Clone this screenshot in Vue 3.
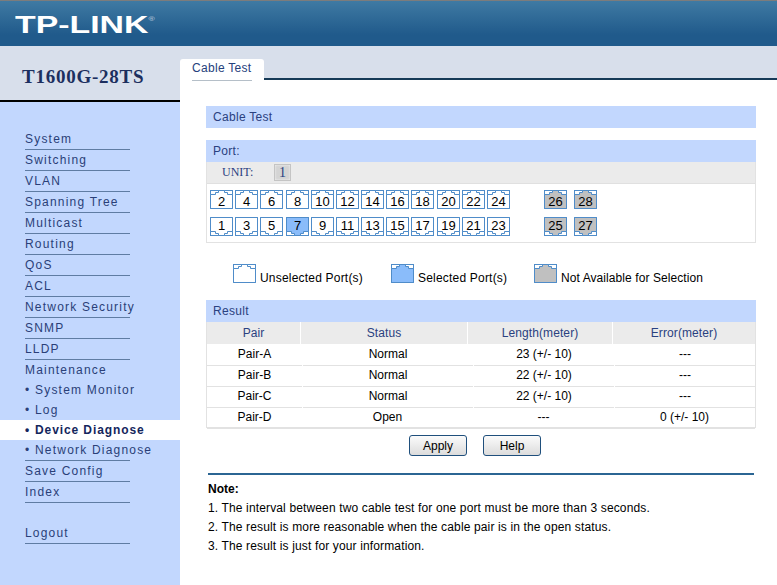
<template>
  <div class="page">
    <header class="top-bar">
      <span class="logo">TP-LINK<sup class="reg">®</sup></span>
    </header>

    <div class="body-row">
      <aside class="sidebar">
        <div class="model">T1600G-28TS</div>
        <nav class="menu">
          <a
            v-for="item in menuItems"
            :key="item.label"
            class="menu-item"
            :class="{ sub: item.sub, active: item.active, plain: item.plain, gap: item.gap, 'last-sub': item.last }"
          >
            <span v-if="item.sub" class="dot">•</span>{{ item.label }}
          </a>
        </nav>
      </aside>

      <main class="content">
        <div class="tabs">
          <div class="tab"><span>Cable Test</span></div>
        </div>

        <div class="panel">
          <div class="title-bar title-main">Cable Test</div>

          <section class="port-box">
            <div class="title-bar">Port:</div>
            <div class="unit-row">
              <span class="unit-label">UNIT:</span>
              <span class="unit-btn">1</span>
            </div>
            <div class="port-grid">
              <div class="port-row" v-for="(row, r) in portRows" :key="r">
                <div class="port-group main-ports">
                  <div
                    v-for="n in row.main"
                    :key="n"
                    class="port"
                    :class="{ flip: r === 1, selected: n === 7 }"
                  >
                    <svg class="port-svg" width="23" height="19" viewBox="0 0 23 19">
                      <rect class="port-frame" x="0.5" y="0.5" width="22" height="18" />
                      <path class="port-shape" :d="portPath" />
                    </svg>
                    <span class="port-num">{{ n }}</span>
                  </div>
                </div>
                <div class="port-group sfp">
                  <div v-for="n in row.sfp" :key="n" class="port na" :class="{ flip: r === 1 }">
                    <svg class="port-svg" width="23" height="19" viewBox="0 0 23 19">
                      <rect class="port-frame" x="0.5" y="0.5" width="22" height="18" />
                      <path class="port-shape" :d="portPath" />
                    </svg>
                    <span class="port-num">{{ n }}</span>
                  </div>
                </div>
              </div>
            </div>
          </section>

          <div class="legend">
            <div class="legend-item" v-for="l in legend" :key="l.text">
              <div class="port" :class="l.cls">
                <svg class="port-svg" width="23" height="19" viewBox="0 0 23 19">
                  <rect class="port-frame" x="0.5" y="0.5" width="22" height="18" />
                  <path class="port-shape" :d="portPath" />
                </svg>
              </div>
              <span class="legend-text">{{ l.text }}</span>
            </div>
          </div>

          <section class="result-box">
            <div class="title-bar">Result</div>
            <div class="result-head">
              <div>Pair</div>
              <div>Status</div>
              <div>Length(meter)</div>
              <div>Error(meter)</div>
            </div>
            <div class="result-row" v-for="row in results" :key="row.pair">
              <div>{{ row.pair }}</div>
              <div>{{ row.status }}</div>
              <div>{{ row.length }}</div>
              <div>{{ row.error }}</div>
            </div>
          </section>

          <div class="actions">
            <button type="button" class="btn">Apply</button>
            <button type="button" class="btn">Help</button>
          </div>

          <div class="notes">
            <div class="note-title">Note:</div>
            <div class="note-line" v-for="n in notes" :key="n">{{ n }}</div>
          </div>
        </div>
      </main>
    </div>
  </div>
</template>

<script setup>
// Sidebar entries
const menuItems = [
  { label: 'System' },
  { label: 'Switching' },
  { label: 'VLAN' },
  { label: 'Spanning Tree' },
  { label: 'Multicast' },
  { label: 'Routing' },
  { label: 'QoS' },
  { label: 'ACL' },
  { label: 'Network Security' },
  { label: 'SNMP' },
  { label: 'LLDP' },
  { label: 'Maintenance', plain: true },
  { label: 'System Monitor', sub: true },
  { label: 'Log', sub: true },
  { label: 'Device Diagnose', sub: true, active: true },
  { label: 'Network Diagnose', sub: true, last: true },
  { label: 'Save Config' },
  { label: 'Index' },
  { label: 'Logout', gap: true },
]

// Port panel, top row is even, bottom row is odd
const portRows = [
  { main: [2, 4, 6, 8, 10, 12, 14, 16, 18, 20, 22, 24], sfp: [26, 28] },
  { main: [1, 3, 5, 7, 9, 11, 13, 15, 17, 19, 21, 23], sfp: [25, 27] },
]

// RJ45 jack body with the notch at the top, the frame is drawn separately
const portPath = 'M0.5 18.5V4.5H5.5V2.5H8.5V0.5H14.5V2.5H17.5V4.5H22.5V18.5Z'

const legend = [
  { cls: '', text: 'Unselected Port(s)' },
  { cls: 'selected', text: 'Selected Port(s)' },
  { cls: 'na', text: 'Not Available for Selection' },
]

const results = [
  { pair: 'Pair-A', status: 'Normal', length: '23 (+/- 10)', error: '---' },
  { pair: 'Pair-B', status: 'Normal', length: '22 (+/- 10)', error: '---' },
  { pair: 'Pair-C', status: 'Normal', length: '22 (+/- 10)', error: '---' },
  { pair: 'Pair-D', status: 'Open', length: '---', error: '0 (+/- 10)' },
]

const notes = [
  '1. The interval between two cable test for one port must be more than 3 seconds.',
  '2. The result is more reasonable when the cable pair is in the open status.',
  '3. The result is just for your information.',
]
</script>

<style>
html,
body {
  margin: 0;
  background: #fff;
}
</style>

<style scoped>
.page {
  width: 777px;
  height: 585px;
  overflow: hidden;
  display: flex;
  flex-direction: column;
  font-family: 'Liberation Sans', Arial, sans-serif;
  font-size: 12px;
  color: #000;
}

.top-bar {
  height: 46px;
  flex: none;
  box-sizing: border-box;
  border-top: 1px solid #7c7c7c;
  background: linear-gradient(#3f7aa3, #205a8b 75%);
  padding: 10px 0 0 15px;
}

.logo {
  font-size: 24px;
  line-height: 27px;
  font-weight: 700;
  color: #fff;
  display: inline-block;
  transform: scaleX(1.41);
  transform-origin: left center;
  white-space: nowrap;
}

.reg {
  font-size: 6px;
  font-weight: 400;
  vertical-align: 12px;
  line-height: 0;
  color: #c9d6e0;
}

.body-row {
  flex: 1;
  display: flex;
  min-height: 0;
}

.sidebar {
  width: 180px;
  flex: none;
  background: #c2d7fe;
}

.model {
  height: 56px;
  box-sizing: border-box;
  background: #d8dfeb;
  border-bottom: 2px solid #000;
  padding-top: 20px;
  padding-left: 22px;
  font-family: 'Liberation Serif', 'Times New Roman', serif;
  font-size: 19px;
  line-height: 22px;
  font-weight: 700;
  color: #1c2f5f;
  letter-spacing: 0.75px;
  white-space: nowrap;
}

.menu {
  display: flex;
  flex-direction: column;
  padding-top: 27px;
}

.menu-item {
  display: block;
  margin-left: 25px;
  width: 105px;
  height: 21px;
  box-sizing: border-box;
  border-bottom: 1px solid #5f7ca3;
  font-size: 12px;
  line-height: 21px;
  letter-spacing: 1.2px;
  color: #2a3f78;
  white-space: nowrap;
}

.menu-item.plain {
  height: 20px;
  line-height: 20px;
  border-bottom: none;
}

.menu-item.sub {
  margin-left: 0;
  width: auto;
  height: 20px;
  padding-left: 25px;
  line-height: 20px;
  border-bottom: none;
}

.menu-item.last-sub {
  height: 21px;
  position: relative;
}

.menu-item.last-sub::after {
  content: '';
  position: absolute;
  left: 25px;
  width: 105px;
  bottom: 0;
  border-bottom: 1px solid #5f7ca3;
}

.dot {
  display: inline-block;
  width: 10px;
  letter-spacing: 0;
}

.menu-item.active {
  background: #fff;
  font-weight: 700;
  color: #14265c;
  letter-spacing: 0.9px;
}

.menu-item.gap {
  margin-top: 20px;
}

.content {
  flex: 1;
  min-width: 0;
  display: flex;
  flex-direction: column;
}

.tabs {
  height: 34px;
  flex: none;
  box-sizing: border-box;
  background: #d8dfeb;
  border-bottom: 2px solid #163a57;
  padding-top: 13px;
}

.tab {
  width: 84px;
  height: 21px;
  box-sizing: border-box;
  background: #fff;
  border-radius: 3px 3px 0 0;
  padding-left: 12px;
  position: relative;
}

.tab span {
  display: block;
  width: 60px;
  height: 21px;
  border-bottom: 1px solid #b5bfc8;
  font-size: 12px;
  line-height: 19px;
  letter-spacing: 0.3px;
  color: #25417c;
  white-space: nowrap;
}

.panel {
  padding: 26px 21px 0 26px;
}

.title-bar {
  height: 22px;
  background: #c2d7fe;
  padding-left: 7px;
  font-size: 12px;
  line-height: 23px;
  letter-spacing: 0.3px;
  color: #2a4180;
}

.title-main {
  margin-bottom: 12px;
}

.port-box {
  border: 1px solid #e2e2e2;
  border-top: none;
}

.port-box .title-bar,
.result-box .title-bar {
  margin: 0 -1px;
}

.unit-row {
  height: 22px;
  box-sizing: border-box;
  background: #ebebeb;
  border-bottom: 1px solid #e0e0e0;
  display: flex;
  align-items: center;
  font-family: 'Liberation Serif', 'Times New Roman', serif;
  font-size: 12px;
  color: #2a4180;
}

.unit-label {
  margin-left: 15px;
  width: 52px;
}

.unit-btn {
  width: 17px;
  height: 17px;
  box-sizing: border-box;
  border: 1px solid #c4c4c4;
  background: #d4d4d4;
  box-shadow: inset 0 0 2px #fafafa;
  text-align: center;
  font-size: 14px;
  line-height: 16px;
}

.port-grid {
  padding: 6px 0 6px 3px;
  display: flex;
  flex-direction: column;
  gap: 8px;
}

.port-row {
  display: flex;
}

.port-group {
  display: flex;
  gap: 2px;
}

.main-ports .port:nth-child(4),
.main-ports .port:nth-child(10) {
  margin-left: 1px;
}

.port-group.sfp {
  gap: 7px;
  margin-left: 34px;
}

.port {
  position: relative;
  width: 23px;
  height: 19px;
  flex: none;
}

.port-svg {
  display: block;
}

.port.flip .port-svg {
  transform: scaleY(-1);
}

.port-frame {
  fill: #fff;
  stroke: #4f8cc9;
}

.port-shape {
  fill: #fff;
  stroke: #4f8cc9;
}

.port.selected .port-shape {
  fill: #8abcfa;
}

.port.na .port-shape {
  fill: #c0c0c0;
}

.port-num {
  position: absolute;
  left: 0;
  right: 0;
  top: 5px;
  text-align: center;
  font-size: 13px;
  line-height: 14px;
}

.port.flip .port-num {
  top: 2px;
}

.legend {
  display: grid;
  grid-template-columns: 158px 143px 1fr;
  height: 57px;
  box-sizing: border-box;
  padding: 21px 0 0 27px;
}

.legend-item {
  display: flex;
  gap: 4px;
  height: 19px;
}

.legend-text {
  margin-top: 7px;
  line-height: 14px;
  letter-spacing: 0.2px;
  white-space: nowrap;
}

.legend-item:last-child .legend-text {
  letter-spacing: 0.08px;
}

.result-box {
  border: 1px solid #e2e2e2;
  border-top: none;
}

.result-head,
.result-row {
  display: grid;
  text-align: center;
}

.result-head {
  grid-template-columns: 93px 167px 145px 1fr;
  height: 21px;
  line-height: 22px;
  color: #2a4180;
  letter-spacing: 0.1px;
}

.result-head > div {
  background: #ebebeb;
  border-left: 1px solid #fff;
}

.result-head > div:first-child {
  border-left: none;
}

.result-row {
  grid-template-columns: 95px 171px 141px 1fr;
  height: 21px;
  line-height: 22px;
}

.result-row > div {
  box-sizing: border-box;
  border-bottom: 1px solid #e2e2e2;
  margin-left: 1px;
}

.result-row > div:first-child {
  margin-left: 0;
}

.result-row:last-child > div {
  margin-left: 0;
}

.actions {
  display: flex;
  justify-content: center;
  gap: 16px;
  padding-top: 7px;
  padding-right: 12px;
}

.btn {
  width: 58px;
  height: 21px;
  padding: 1px 0 0;
  box-sizing: border-box;
  border: 1px solid #1f4f7c;
  border-radius: 3px;
  background: linear-gradient(#fbfbfb, #dcdcdc);
  font-family: 'Liberation Sans', Arial, sans-serif;
  font-size: 12px;
  color: #000;
}

.notes {
  margin: 17px 2px 0;
  border-top: 2px solid #2b6593;
  padding-top: 5px;
  line-height: 19px;
  font-size: 12px;
  letter-spacing: 0.14px;
}

.note-title {
  font-weight: 700;
  letter-spacing: 0;
}
</style>
